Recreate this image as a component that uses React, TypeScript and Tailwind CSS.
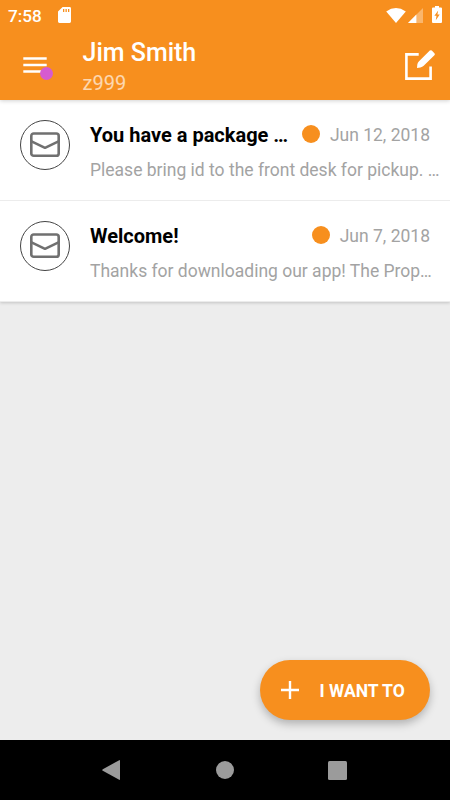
interface Message {
    title: string
    date: string
    preview: string
}

const messages: Message[] = [
    {
        title: "You have a package …",
        date: "Jun 12, 2018",
        preview: "Please bring id to the front desk for pickup. …",
    },
    {
        title: "Welcome!",
        date: "Jun 7, 2018",
        preview: "Thanks for downloading our app! The Prop…",
    },
]

function StatusBar() {
    return (
        <div className="flex h-[30px] items-center pl-2 pr-2 text-white">
            <span className="pt-0.5 text-[17.2px] font-medium leading-[28px]">7:58</span>
            <svg className="ml-4 h-4 w-[13px]" viewBox="0 0 13 16" fill="currentColor">
                <path
                    fillRule="evenodd"
                    d="M4.6 0H11.6Q13 0 13 1.4V14.6Q13 16 11.6 16H1.4Q0 16 0 14.6V4.6ZM5 2V5H6.3V2ZM7.5 2V5H8.8V2ZM10 2V5H11.3V2Z"
                />
            </svg>
            <div className="ml-auto flex items-center">
                <svg className="h-[15px] w-5" viewBox="0 0 20 15" fill="currentColor">
                    <path d="M0.2 3.4Q10 -3.4 19.8 3.4L10 15Z" />
                </svg>
                <svg className="ml-[2.5px] mt-px h-[15px] w-[15px]" viewBox="0 0 15 15" fill="currentColor">
                    <path d="M15 0V15H0Z" opacity="0.35" />
                    <path d="M8.4 6.6V15H0Z" />
                </svg>
                <svg className="-mt-px ml-[9px] h-[17px] w-[10px]" viewBox="0 0 10 17" fill="currentColor">
                    <path
                        fillRule="evenodd"
                        d="M3 0H7V1.6H9Q10 1.6 10 2.6V16Q10 17 9 17H1Q0 17 0 16V2.6Q0 1.6 1 1.6H3ZM6.2 4.5L2.4 9.8H4.5L3.8 14.2L7.7 8.5H5.4Z"
                    />
                </svg>
            </div>
        </div>
    )
}

function Header() {
    return (
        <header className="relative z-10 h-[100px] bg-[#f78f1e] shadow-[0_1px_4px_rgba(0,0,0,0.18)]">
            <StatusBar />
            <div className="flex h-[70px] pl-[23px] pr-[15px]">
                <div className="relative mt-[27px] h-4 w-6">
                    <svg className="h-4 w-6" viewBox="0 0 24 16" fill="white">
                        <path d="M0.3 0.2H23.7V2.8H0.3ZM0.3 6.7H23.7V9.3H0.3ZM0.3 13.2H23.7V15.8H0.3Z" />
                    </svg>
                    <span className="absolute left-[17px] top-[10px] h-[13px] w-[13px] rounded-full bg-[#d65bcf]" />
                </div>
                <div className="ml-[35.5px] flex flex-col whitespace-nowrap">
                    <h1 className="mt-2 text-[25px] font-medium leading-[30px] text-white">Jim Smith</h1>
                    <p className="mt-[3px] text-[20px] leading-6 text-white/65">z999</p>
                </div>
                <svg className="ml-auto mt-5 h-[30px] w-[30px]" viewBox="0 0 30 30">
                    <path d="M13.7 4.4H1.4V28.6H25.6V16.4" fill="none" stroke="white" strokeWidth="2.6" />
                    <path
                        d="M12 18L12.3 14.6Q12.6 12.6 14 11.3L24.8 0.6Q25.8 -0.3 26.8 0.6L29.4 3.2Q30.3 4.2 29.4 5.2L18.7 15.8Q17.4 17.1 15.4 17.6Z"
                        fill="white"
                    />
                </svg>
            </div>
        </header>
    )
}

function MessageRow({ message }: { message: Message }) {
    return (
        <li className="flex h-[101px] border-b border-[#ececec] bg-white pl-5 pr-[10px]">
            <div className="mt-5 flex h-[50px] w-[50px] shrink-0 items-center justify-center rounded-full border border-[#444]">
                <svg
                    className="h-[26px] w-[30px]"
                    viewBox="0 0 30 26"
                    fill="none"
                    stroke="#707070"
                    strokeWidth="2.6"
                    strokeLinejoin="round"
                >
                    <rect x="1.3" y="1.5" width="27.4" height="22.3" rx="2.4" />
                    <path d="M1.5 9.3L15 15.8L28.5 9.3" />
                </svg>
            </div>
            <div className="ml-5 min-w-0 flex-1 whitespace-nowrap">
                <div className="mt-[22px] flex h-6 items-center pr-[10px]">
                    <h2 className="pt-px text-[20px] font-bold leading-6 text-black">{message.title}</h2>
                    <span className="ml-auto h-[18px] w-[18px] rounded-full bg-[#f78f1e]" />
                    <time className="ml-[10px] pt-0.5 text-[17.5px] leading-6 text-[#a3a3a3]">{message.date}</time>
                </div>
                <p className="mt-3 text-[17.5px] leading-6 text-[#a3a3a3]">{message.preview}</p>
            </div>
        </li>
    )
}

function NavigationBar() {
    return (
        <nav className="flex h-[60px] items-center bg-black pl-[102px] pr-[103px]">
            <svg className="h-5 w-[18px]" viewBox="0 0 18 20" fill="#9b9b9b">
                <path d="M17.2 0.2Q18 -0.2 18 0.8V19.2Q18 20.2 17.2 19.8L0.8 10.8Q-0.4 10 0.8 9.2Z" />
            </svg>
            <span className="ml-24 h-[18px] w-[18px] rounded-full bg-[#9b9b9b]" />
            <span className="ml-auto h-[19px] w-[19px] rounded-[1.5px] bg-[#9b9b9b]" />
        </nav>
    )
}

export default function App() {
    return (
        <div className="flex h-[800px] w-[450px] flex-col overflow-hidden bg-[#ededed] font-[Roboto,sans-serif]">
            <Header />
            <main className="flex flex-1 flex-col">
                <ul className="shadow-[0_1px_3px_rgba(0,0,0,0.18)]">
                    {messages.map((message) => (
                        <MessageRow key={message.title} message={message} />
                    ))}
                </ul>
                <button className="mb-5 mr-5 mt-auto flex h-[60px] w-[170.5px] items-center self-end rounded-full bg-[#f78f1e] pl-[21px] text-white shadow-[0_4px_9px_rgba(0,0,0,0.25)]">
                    <svg className="h-[18px] w-[18px]" viewBox="0 0 18 18" stroke="white" strokeWidth="2.4">
                        <path d="M9 0V18M0 9H18" />
                    </svg>
                    <span className="ml-[21px] whitespace-nowrap pt-0.5 text-[17.5px] font-bold leading-6">
                        I WANT TO
                    </span>
                </button>
            </main>
            <NavigationBar />
        </div>
    )
}
